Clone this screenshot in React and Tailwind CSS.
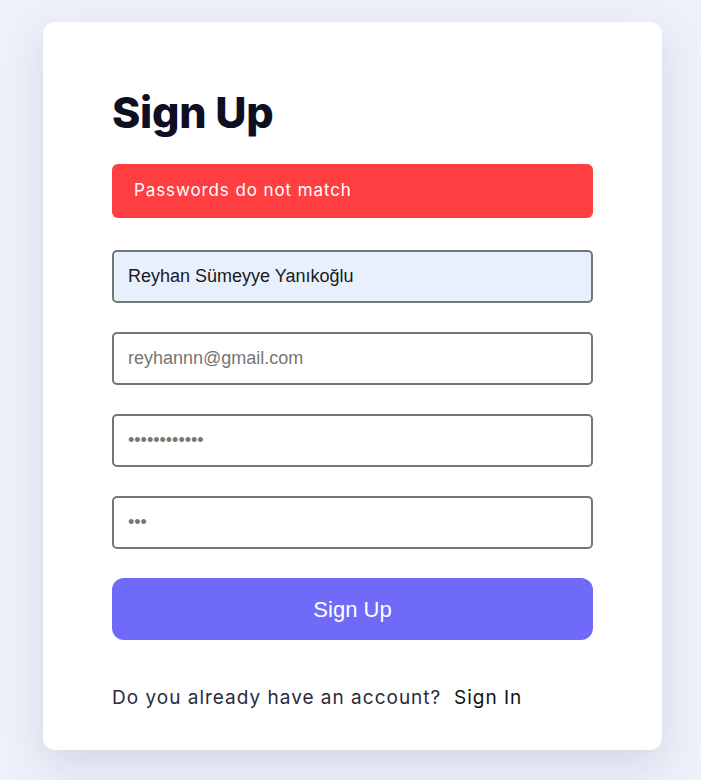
import React from "react";

export default function App() {
  const inputCls =
    "block w-full h-[53px] rounded-[5px] border-2 border-[#767676] px-[14px] text-[18px] text-[#1a1a1a] outline-none placeholder:text-[#757575]";
  return (
    <div className="min-h-screen w-full bg-[#eef1fa] pt-[22px] pb-[30px]" style={{ fontFamily: "'Liberation Sans', Arial, sans-serif" }}>
      <div className="ml-[43px] w-[619px] h-[728px] rounded-[12px] bg-white shadow-[0_15px_40px_rgba(90,100,140,0.18)] px-[69px] pt-[60px]">
        <h1 className="text-[43px] leading-[60px] font-extrabold text-[#0f0f23] tracking-[-0.3px]" style={{ fontFamily: "Inter, 'Noto Sans', sans-serif" }}>
          Sign Up
        </h1>
        <div className="mt-[22px] h-[54px] rounded-[6px] bg-[#ff3e42] flex items-center px-[22px] text-white text-[17px] tracking-[0.9px]" style={{ fontFamily: "Inter, 'Noto Sans', sans-serif" }}>
          Passwords do not match
        </div>
        <div className="mt-[32px] flex flex-col gap-[29px]">
          <input className={inputCls + " bg-[#e8f0fe]"} defaultValue="Reyhan Sümeyye Yanıkoğlu" />
          <input className={inputCls + " bg-white"} placeholder="reyhannn@gmail.com" />
          <input type="password" className={inputCls + " bg-white text-[#767676]"} defaultValue="123456789012" />
          <input type="password" className={inputCls + " bg-white text-[#767676]"} defaultValue="123" />
        </div>
        <button className="mt-[29px] block w-full h-[62px] rounded-[12px] bg-[#6f6bf8] text-white text-[22px]">
          Sign Up
        </button>
        <p className="mt-[44px] text-[19px] tracking-[1px] text-[#2a2a40]" style={{ fontFamily: "Inter, 'Noto Sans', sans-serif" }}>
          Do you already have an account?&nbsp; <span className="text-[#111]">Sign In</span>
        </p>
      </div>
    </div>
  );
}
